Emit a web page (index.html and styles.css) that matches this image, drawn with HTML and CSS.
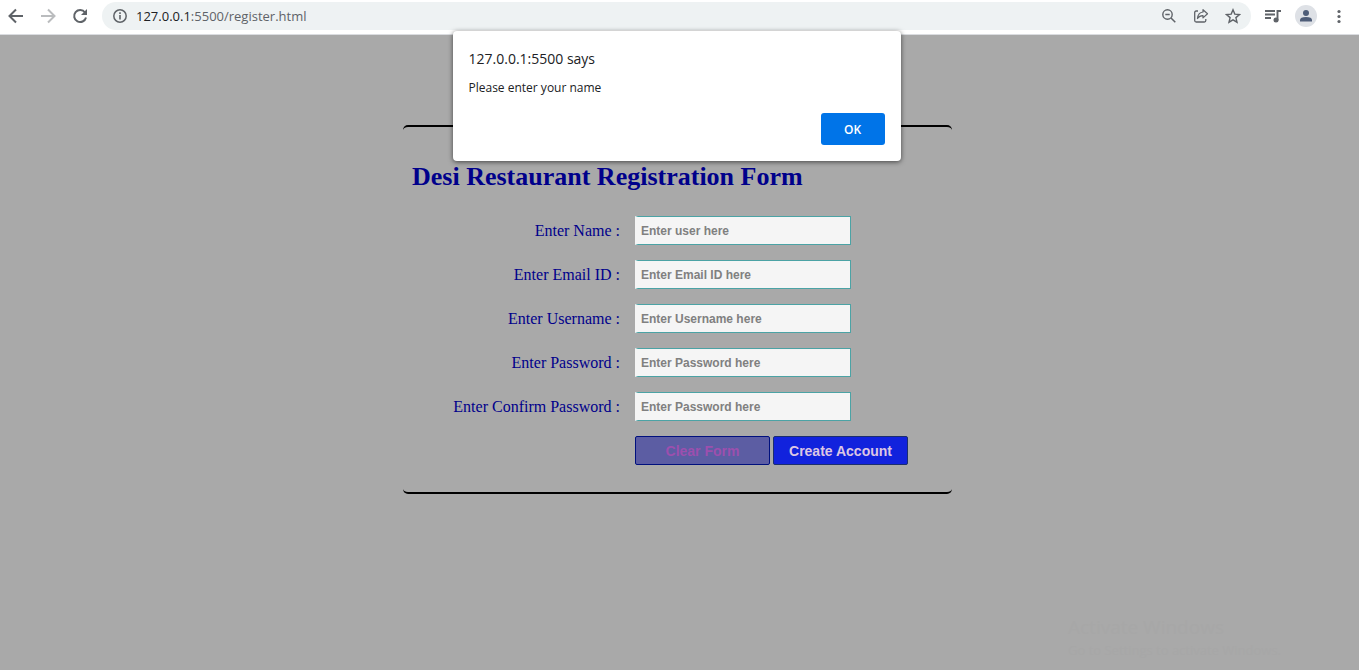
FILE: index.html
```html
<!DOCTYPE html>
<html lang="en">
<head>
<meta charset="utf-8">
<meta name="viewport" content="width=device-width, initial-scale=1">
<title>Desi Restaurant Registration Form</title>
<link rel="stylesheet" href="styles.css">
</head>
<body>
<header class="toolbar">
  <nav class="navigation">
    <button class="tool" type="button" aria-label="Back"><svg viewBox="0 0 16 16"><path d="M15 8H2M8 1.5L1.5 8 8 14.5" fill="none" stroke="#5f6368" stroke-width="2"/></svg></button>
    <button class="tool" type="button" aria-label="Forward"><svg viewBox="0 0 16 16"><path d="M1 8h13M8 1.5L14.5 8 8 14.5" fill="none" stroke="#babcbe" stroke-width="2"/></svg></button>
    <button class="tool" type="button" aria-label="Reload"><svg viewBox="0 0 16 16"><path d="M13 4.5A6 6 0 1 0 14 9.5" fill="none" stroke="#5f6368" stroke-width="2"/><path d="M15 1v6H9z" fill="#5f6368"/></svg></button>
  </nav>
  <div class="omnibox">
    <button class="tool" type="button" aria-label="Site information"><svg viewBox="0 0 16 16"><circle cx="8" cy="8" r="6.2" fill="none" stroke="#5f6368" stroke-width="1.5"/><path d="M8 7v4.5M8 4.3v1.6" stroke="#5f6368" stroke-width="1.6"/></svg></button>
    <div class="address"><span class="host">127.0.0.1</span>:5500/register.html</div>
    <button class="tool" type="button" aria-label="Zoom"><svg viewBox="0 0 16 16"><circle cx="6.5" cy="6.5" r="4.7" fill="none" stroke="#5f6368" stroke-width="1.4"/><path d="M4.3 6.5h4.4M10 10l4.3 4.3" stroke="#5f6368" stroke-width="1.5"/></svg></button>
    <button class="tool" type="button" aria-label="Share"><svg viewBox="0 0 16 16"><path d="M5 3H3.2Q1.7 3 1.7 4.5V12.5Q1.7 14 3.2 14H11.3Q12.8 14 12.8 12.5V11" fill="none" stroke="#5f6368" stroke-width="1.3"/><path d="M10 1.7L14.5 5.8 10 9.9V7.7Q6.500 7.6 4.5 10.5 5 4.6 10 4z" fill="none" stroke="#5f6368" stroke-width="1.2" stroke-linejoin="round"/></svg></button>
    <button class="tool" type="button" aria-label="Bookmark"><svg viewBox="0 0 16 16"><path d="M8 1.8l1.8 4.3 4.7.4-3.6 3.1 1.1 4.6L8 11.8l-4 2.4 1.1-4.6L1.5 6.5l4.7-.4z" fill="none" stroke="#5f6368" stroke-width="1.4"/></svg></button>
  </div>
  <button class="tool" type="button" aria-label="Media controls"><svg viewBox="0 0 16 16"><path d="M0 3h10M0 6.5h10M0 10h6M12.5 12.500V3H16" fill="none" stroke="#5f6368" stroke-width="1.9"/><circle cx="11" cy="12" r="2.5" fill="#5f6368"/></svg></button>
  <button class="tool profile" type="button" aria-label="Profile"><svg viewBox="0 0 16 16"><circle cx="8" cy="5" r="3" fill="#4e5d78"/><path d="M2 13.5V12Q2 9 8 9t6 3v1.5z" fill="#4e5d78"/></svg></button>
  <button class="tool" type="button" aria-label="Menu"><svg viewBox="0 0 16 16"><g fill="#5f6368"><circle cx="8" cy="3.5" r="1.6"/><circle cx="8" cy="8.5" r="1.6"/><circle cx="8" cy="13.5" r="1.6"/></g></svg></button>
</header>

<main class="page">
  <form class="register">
    <h1 class="title">Desi Restaurant Registration Form</h1>
    <div class="fields">
      <label for="name">Enter Name :</label>
      <input class="field" id="name" type="text" placeholder="Enter user here">
      <label for="email">Enter Email ID :</label>
      <input class="field" id="email" type="email" placeholder="Enter Email ID here">
      <label for="username">Enter Username :</label>
      <input class="field" id="username" type="text" placeholder="Enter Username here">
      <label for="password">Enter Password :</label>
      <input class="field" id="password" type="password" placeholder="Enter Password here">
      <label for="confirm">Enter Confirm Password :</label>
      <input class="field" id="confirm" type="password" placeholder="Enter Password here">
      <div class="actions">
        <button class="btn clear" type="reset">Clear Form</button>
        <button class="btn create" type="button">Create Account</button>
      </div>
    </div>
  </form>
</main>

<div class="alert" role="alertdialog" aria-labelledby="alert-title" aria-describedby="alert-text">
  <h2 class="alert-title" id="alert-title">127.0.0.1:5500 says</h2>
  <p class="alert-text" id="alert-text">Please enter your name</p>
  <button class="ok" type="button">OK</button>
</div>

<aside class="watermark">
  <p class="watermark-title">Activate Windows</p>
  <p class="watermark-text">Go to Settings to activate Windows.</p>
</aside>
</body>
</html>
```
FILE: styles.css
```css
* { box-sizing: border-box; }

body {
  margin: 0;
  min-height: 100vh;
  background: #a9a9a9;
  font-family: "Liberation Serif", serif;
}

button { font: inherit; cursor: pointer; }

.toolbar {
  display: flex;
  align-items: center;
  gap: 14px;
  height: 35px;
  padding: 0 12px 3px 8px;
  background: #fff;
  border-bottom: 1px solid #dadce0;
}

.navigation {
  display: flex;
  gap: 16px;
}

.tool {
  display: flex;
  flex: none;
  width: 16px;
  padding: 0;
  border: 0;
  background: none;
}

.tool svg { width: 16px; height: 16px; }

.omnibox {
  display: flex;
  flex: 1;
  align-items: center;
  gap: 16px;
  height: 28px;
  padding: 0 10px;
  border-radius: 14px;
  background: #eef2f3;
}

.address {
  flex: 1;
  margin-left: -8px;
  color: #5f6368;
  font: 13px/20px "Open Sans", sans-serif;
}

.host { color: #202124; }

.profile {
  justify-content: center;
  width: 22px;
  padding: 3px;
  border-radius: 50%;
  background: #dee1e6;
}

.page { padding: 90px 4px 24px 0; }

.register {
  max-width: 549px;
  margin: 0 auto;
  padding: 33px 9px 27px;
  border: solid #000;
  border-width: 2px 0;
  border-radius: 5px;
  color: #00008b;
}

.title {
  margin: 0 0 22px;
  font-size: 26px;
  line-height: 34px;
}

.fields {
  display: grid;
  grid-template-columns: 208px 1fr;
  gap: 15px;
  align-items: center;
  font-size: 16px;
}

.fields label { text-align: right; }

.field {
  width: 216px;
  height: 29px;
  padding: 0 3px;
  border: 1px solid #4ba3a5;
  border-left: 3px solid #f5f5f5;
  background: #f5f5f5;
  font: bold 12px "Liberation Sans", Arial, sans-serif;
}

.field::placeholder { color: #808080; opacity: 1; }

.actions {
  display: flex;
  grid-column: 2;
  gap: 3px;
}

.btn {
  width: 135px;
  height: 29px;
  padding: 0;
  border: 1px solid #1b2e6e;
  border-radius: 2px;
  font: bold 14px "Liberation Sans", Arial, sans-serif;
}

.clear {
  border-color: #00107e;
  background: #5c5da3;
  color: #9d4fae;
}

.create {
  background: #1122dd;
  color: #dcc6e4;
}

.alert {
  position: absolute;
  top: 31px;
  left: calc(50% - 227px);
  display: flex;
  flex-direction: column;
  width: 448px;
  padding: 18px 16px 16px;
  border-radius: 4px;
  background: #fff;
  box-shadow: 0 1px 5px rgba(0, 0, 0, 0.6);
  color: #202124;
  font-family: "Open Sans", sans-serif;
}

.alert-title {
  margin: 0 0 9px;
  font-size: 14px;
  font-weight: 400;
  line-height: 20px;
}

.alert-text {
  margin: 0 0 15px;
  font-size: 12px;
  line-height: 20px;
}

.ok {
  align-self: flex-end;
  width: 64px;
  height: 32px;
  border: 0;
  border-radius: 3px;
  background: #0074e8;
  color: #fff;
  font-size: 12px;
  font-weight: 600;
}

.watermark {
  position: absolute;
  right: 51px;
  bottom: 10px;
  width: 240px;
  color: #a7a7a7;
  font-family: "Open Sans", sans-serif;
  pointer-events: none;
}

.watermark p { margin: 0; }

.watermark-title {
  font-size: 19px;
  line-height: 26px;
}

.watermark-text {
  font-size: 13px;
  line-height: 20px;
}
```
